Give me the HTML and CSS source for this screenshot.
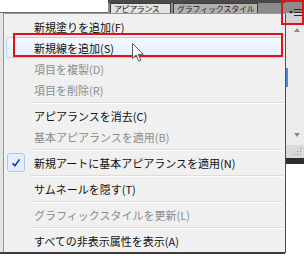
FILE: index.html
```html
<!DOCTYPE html>
<html lang="ja">
<head>
    <meta charset="UTF-8">
    <title>アピアランス パネルメニュー</title>
    <link rel="stylesheet" href="styles.css">
</head>
<body>
    <div class="screen">
        <div class="panel">
            <div class="panel-main">
                <div class="panel-top">
                    <div class="panel-gap"></div>
                    <div class="tabstrip">
                        <span class="tab tab-active">アピアランス</span>
                        <span class="tab tab-other">グラフィックスタイル</span>
                    </div>
                </div>
                <div class="panel-content"></div>
            </div>
            <div class="panel-side">
                <div class="flyout">
                    <svg width="13" height="9" viewBox="0 0 13 9">
                        <path d="M0 3h4l-2 3z" fill="#2b2b2b"/>
                        <path d="M5 1.5h8M5 4.5h8M5 7.5h8" stroke="#2b2b2b" stroke-width="1"/>
                    </svg>
                </div>
                <div class="scrollbar">
                    <span class="arrow arrow-up"></span>
                    <span class="thumb"></span>
                    <span class="arrow arrow-down"></span>
                </div>
                <div class="grip">
                    <svg width="9" height="9" viewBox="0 0 9 9">
                        <path d="M7 1h1v1h-1zM4 4h1v1h-1zM7 4h1v1h-1zM1 7h1v1h-1zM4 7h1v1h-1zM7 7h1v1h-1z" fill="#8a8a8a"/>
                    </svg>
                </div>
                <div class="side-foot"></div>
            </div>
        </div>

        <ul class="menu">
            <li class="item"><span class="gutter"></span>新規塗りを追加(F)</li>
            <li class="item hover"><span class="gutter"></span>新規線を追加(S)</li>
            <li class="item disabled"><span class="gutter"></span>項目を複製(D)</li>
            <li class="item disabled"><span class="gutter"></span>項目を削除(R)</li>
            <li class="sep"></li>
            <li class="item"><span class="gutter"></span>アピアランスを消去(C)</li>
            <li class="item disabled"><span class="gutter"></span>基本アピアランスを適用(B)</li>
            <li class="sep"></li>
            <li class="item">
                <span class="gutter">
                    <span class="check">
                        <svg width="10" height="10" viewBox="0 0 10 10">
                            <path d="M1.5 5.2l2.4 2.6 4.6-6.4" fill="none" stroke="#123f94" stroke-width="1.6"/>
                        </svg>
                    </span>
                </span>新規アートに基本アピアランスを適用(N)
            </li>
            <li class="sep"></li>
            <li class="item"><span class="gutter"></span>サムネールを隠す(T)</li>
            <li class="sep"></li>
            <li class="item disabled"><span class="gutter"></span>グラフィックスタイルを更新(L)</li>
            <li class="sep"></li>
            <li class="item"><span class="gutter"></span>すべての非表示属性を表示(A)</li>
        </ul>

        <div class="mark-flyout"></div>

        <svg class="cursor" width="13" height="20" viewBox="0 0 13 20">
            <path d="M0.5 0.5v15l3.6-3.4 2.6 6 2.2-1-2.6-5.8h5z" fill="#fff" fill-opacity="0.85" stroke="#5a5a5a" stroke-width="1"/>
        </svg>
    </div>
</body>
</html>
```

FILE: styles.css
```css
* {
    box-sizing: border-box;
}
body {
    margin: 0;
    background: #fff;
    font-family: "Noto Sans CJK JP", "Noto Sans", sans-serif;
}
.screen {
    position: relative;
    width: 304px;
    height: 256px;
    overflow: hidden;
    background: #fff;
}

/* panel behind the menu */
.panel {
    display: flex;
    height: 256px;
}
.panel-main {
    flex: 1;
    display: flex;
    flex-direction: column;
}
.panel-top {
    display: flex;
    height: 13px;
}
.panel-gap {
    width: 108px;
    border-bottom: 1px solid #6a6a6a;
}
.tabstrip {
    flex: 1;
    display: flex;
    align-items: flex-end;
    gap: 2px;
    padding-left: 2px;
    background: #8b8b8b;
    border-top: 3px solid #4a4a4a;
}
.tab {
    height: 10px;
    font-size: 8px;
    line-height: 9px;
    color: #1e1e1e;
    white-space: nowrap;
    border: 1px solid #3c3c3c;
    border-bottom: 0;
}
.tab-active {
    width: 61px;
    padding-left: 3px;
    letter-spacing: -0.4px;
    background: #e2e2e2;
}
.tab-other {
    width: 85px;
    padding-left: 3px;
    letter-spacing: -0.2px;
    background: #b2b2b2;
}
.panel-content {
    flex: 1;
    background: #e4e4e4;
    border-bottom: 2px solid #3e3e3e;
    margin-bottom: 2px;
}
.panel-side {
    width: 19px;
    display: flex;
    flex-direction: column;
}
.flyout {
    height: 25px;
    padding: 8px 0 0 4px;
    background: linear-gradient(#8b8b8b 13px, #d2d2d2 13px);
}
.flyout svg {
    display: block;
}
.scrollbar {
    height: 120px;
    display: flex;
    flex-direction: column;
    align-items: center;
    padding: 3px 0 8px;
    background: #ececec;
    border-left: 1px solid #6e6e6e;
}
.arrow {
    width: 0;
    height: 0;
    margin-left: 3px;
    border-left: 3px solid transparent;
    border-right: 3px solid transparent;
}
.arrow-up {
    border-bottom: 4px solid #8c8c8c;
}
.arrow-down {
    margin-top: auto;
    border-top: 4px solid #8c8c8c;
}
.thumb {
    align-self: flex-start;
    width: 2px;
    height: 19px;
    margin-top: 36px;
    background: #4f86d6;
}
.grip {
    height: 13px;
    display: flex;
    justify-content: flex-end;
    align-items: flex-end;
    padding: 0 2px 2px 0;
    background: #dadada;
}
.side-foot {
    height: 6px;
    background: #2e2e2e;
}

/* popup menu */
.menu {
    position: absolute;
    left: 3px;
    top: 13px;
    width: 283px;
    margin: 0;
    padding: 2px 2px 1px;
    list-style: none;
    background: #f0f0f0;
    border: 1px solid #979797;
    border-right-color: #4e4e4e;
    border-bottom-color: #3a3a3a;
    font-size: 11px;
    color: #111;
}
.item {
    position: relative;
    display: flex;
    align-items: center;
    height: 21px;
    white-space: nowrap;
}
.gutter {
    width: 28px;
    height: 100%;
    display: flex;
    align-items: center;
    padding-left: 1px;
}
.disabled {
    color: #8b8b8b;
}
.hover {
    background: linear-gradient(#f4f8fe, #e5eefb);
    border: 1px solid #b6d3f5;
    border-radius: 3px;
}
.hover .gutter {
    width: 27px;
}
.hover::after {
    content: "";
    position: absolute;
    left: 6px;
    top: -5px;
    right: -1px;
    bottom: 0;
    border: 2px solid #e2121b;
}
.check {
    width: 18px;
    height: 19px;
    display: flex;
    align-items: center;
    justify-content: center;
    border: 1px solid #aac9ef;
    border-radius: 3px;
    background: #e3edfb;
}
.sep {
    height: 2px;
    margin: 2px 0 1px 24px;
    border-top: 1px solid #dcdcdc;
    border-bottom: 1px solid #fff;
}

/* annotation + pointer */
.mark-flyout {
    position: absolute;
    left: 281px;
    top: 0;
    width: 23px;
    height: 25px;
    border: 2px solid #e2121b;
}
.cursor {
    position: absolute;
    left: 132px;
    top: 43px;
}
```
